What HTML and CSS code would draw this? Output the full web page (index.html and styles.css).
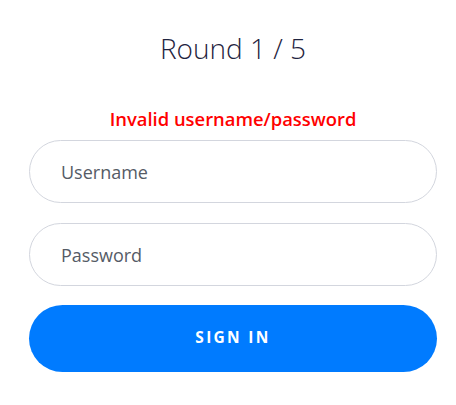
FILE: index.html
```html
<!DOCTYPE html>
<html>
<head>
<meta charset="utf-8">
<link rel="stylesheet" href="styles.css">
</head>
<body>
<main class="login">
  <h1 class="title">Round 1 / 5</h1>
  <p class="error">Invalid username/password</p>
  <form class="form">
    <input class="field" type="text" placeholder="Username">
    <input class="field" type="password" placeholder="Password">
    <button class="btn" type="button">SIGN IN</button>
  </form>
</main>
</body>
</html>
```
FILE: styles.css
```css
html, body {
  margin: 0;
  padding: 0;
  background: #fff;
}
body {
  font-family: "Open Sans", "Noto Sans", sans-serif;
}
.login {
  width: 408px;
  margin-left: 29px;
  display: flex;
  flex-direction: column;
  align-items: center;
}
.title {
  margin: 28px 0 0;
  font-size: 28px;
  font-weight: 300;
  line-height: 40px;
  color: #1f2440;
}
.error {
  margin: 39px 0 0;
  font-size: 18.4px;
  font-weight: 600;
  line-height: 24px;
  color: #ff0000;
}
.form {
  margin-top: 9px;
  width: 100%;
  display: flex;
  flex-direction: column;
  gap: 20px;
}
.field {
  box-sizing: border-box;
  height: 63px;
  width: 100%;
  border: 1px solid #d3d6de;
  border-radius: 32px;
  padding: 0 31px;
  font-family: inherit;
  font-size: 18px;
  color: #495057;
  outline: none;
  background: #fff;
}
.field::placeholder {
  color: #555b66;
}
.btn {
  box-sizing: border-box;
  height: 67px;
  width: 100%;
  margin-top: -1px;
  padding: 0 0 3px;
  border: none;
  border-radius: 34px;
  background: #007bff;
  color: #fff;
  font-family: inherit;
  font-size: 15.5px;
  font-weight: 700;
  letter-spacing: 2.3px;
  cursor: pointer;
}
```
